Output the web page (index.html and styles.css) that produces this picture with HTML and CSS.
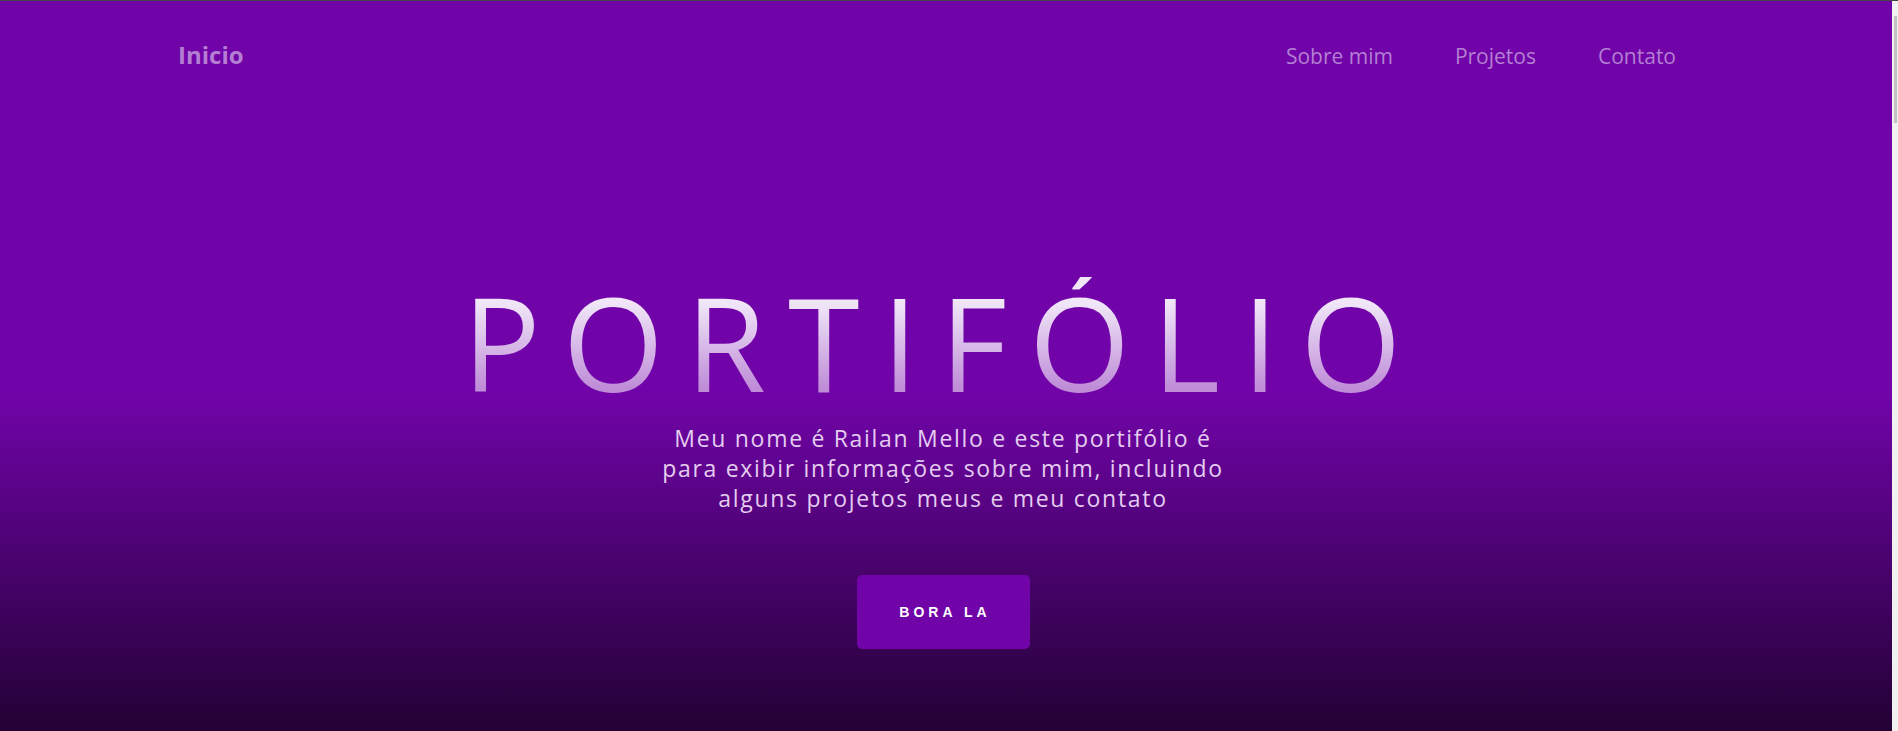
FILE: index.html
```html
<!DOCTYPE html>
<html lang="pt-BR">
<head>
<meta charset="utf-8">
<title>Portifólio - Railan Mello</title>
<link rel="stylesheet" href="styles.css">
</head>
<body>
  <div class="page">
    <header class="nav">
      <a class="brand" href="#">Inicio</a>
      <nav class="links">
        <a href="#sobre">Sobre mim</a>
        <a href="#projetos">Projetos</a>
        <a href="#contato">Contato</a>
      </nav>
    </header>
    <section class="hero">
      <h1 class="title">PORTIFÓLIO</h1>
      <p class="lead">Meu nome é Railan Mello e este portifólio é para exibir informações sobre mim, incluindo alguns projetos meus e meu contato</p>
      <a class="btn" href="#sobre">BORA LA</a>
    </section>
  </div>
  <div class="scrollbar"><div class="thumb"></div></div>
</body>
</html>
```
FILE: styles.css
```css
* { box-sizing: border-box; }
html, body { margin: 0; padding: 0; }
body {
  display: flex;
  height: 731px;
  overflow: hidden;
  border-top: 1px solid #454545;
  background: #f1f1f1;
  font-family: "Open Sans", "Noto Sans", sans-serif;
}
.page {
  flex: 1;
  display: flex;
  flex-direction: column;
  background: linear-gradient(to bottom, rgba(0,0,0,0) 54%, rgba(0,0,0,0.69) 100%), #7004a8;
}
.scrollbar {
  width: 6px;
  background: #f1f1f1;
  padding: 15px 1px 0 2px;
}
.thumb {
  height: 107px;
  background: #c1c1c1;
}
.nav {
  display: flex;
  justify-content: space-between;
  align-items: baseline;
  padding: 37px 216px 0 178px;
  height: 90px;
}
.nav a { text-decoration: none; }
.brand {
  color: #b47fd3;
  font-weight: 700;
  font-size: 24px;
}
.links { display: flex; gap: 62px; }
.links a {
  color: #b47fd3;
  font-size: 21px;
}
.hero {
  display: flex;
  flex-direction: column;
  align-items: center;
  padding: 186px 6px 0 0;
}
.title {
  margin: 0;
  font-size: 130px;
  line-height: 1;
  font-weight: 400;
  letter-spacing: 22px;
  background: linear-gradient(to bottom, #f0e6f8 20%, #bf8dd8 85%);
  -webkit-background-clip: text;
  background-clip: text;
  color: transparent;
}
.lead {
  margin: 16px 0 0;
  width: 585px;
  text-align: center;
  font-size: 23px;
  line-height: 30px;
  letter-spacing: 1.7px;
  color: #e4cdf0;
}
.btn {
  margin-top: 62px;
  width: 173px;
  height: 74px;
  display: flex;
  align-items: center;
  justify-content: center;
  background: #7004a8;
  border-radius: 5px;
  color: #fff;
  text-decoration: none;
  font-family: "Liberation Sans", Arial, sans-serif;
  font-weight: 700;
  font-size: 14px;
  letter-spacing: 4px;
  padding-left: 4px;
}
```
